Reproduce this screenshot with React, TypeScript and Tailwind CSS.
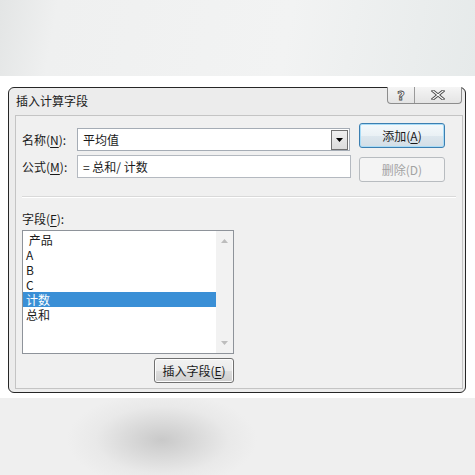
const FONT = "font-['Noto_Sans_CJK_SC','Microsoft_YaHei',sans-serif]";
const BTN =
  "flex items-center justify-center rounded-[3px] border text-[12px] leading-none";

const fields = [" 产品", "A", "B", "C", "计数", "总和"];

function Accel({ text, k, after = "" }: { text: string; k: string; after?: string }) {
  return (
    <span>
      {text}(<span className="underline underline-offset-2">{k}</span>){after}
    </span>
  );
}

function TitleButtons() {
  return (
    <div className="-mt-[1px] mr-[3px] flex h-[17px] w-[75px] rounded-b-[4px] border border-t-0 border-[#8d8d8d] bg-[linear-gradient(#f5f5f5,#e4e4e4)]">
      <div className="flex w-[27px] items-center justify-center border-r border-[#9a9a9a]">
        <span className="text-[13px] font-bold leading-none text-white [-webkit-text-stroke:0.8px_#4a4a4a] font-['DejaVu_Sans',sans-serif]">
          ?
        </span>
      </div>
      <div className="flex flex-1 items-center justify-center">
        <svg width="14" height="10" viewBox="0 0 14 10">
          <path d="M2 1 L12 9 M12 1 L2 9" stroke="#4a4a4a" strokeWidth="3" strokeLinecap="square" />
          <path d="M2 1 L12 9 M12 1 L2 9" stroke="#ffffff" strokeWidth="1.2" strokeLinecap="square" />
        </svg>
      </div>
    </div>
  );
}

function Dialog() {
  return (
    <div className={`ml-[8px] flex h-[306px] w-[458px] flex-col rounded-[6px] border border-[#262626] bg-[#ececec] ${FONT} text-[#1a1a1a]`}>
      <div className="flex h-[27px] items-start justify-between">
        <div className="pl-[7px] pt-[5px] text-[12px] leading-[16px]">插入计算字段</div>
        <TitleButtons />
      </div>
      <div className="ml-[6px] flex h-[274px] w-[448px] flex-col border border-[#c4c4c4] bg-[#f0f0f0] pl-[6px] pt-[7px] text-[12px]">
        <div className="flex">
          <div className="mt-[5px] flex flex-col">
            <div className="flex items-center">
              <div className="w-[55px] leading-[16px]">
                <Accel text="名称" k="N" after=":" />
              </div>
              <div className="flex h-[23px] w-[273px] items-center justify-between border border-[#a5acb5] bg-white pl-[5px] pr-[1px]">
                <span>平均值</span>
                <div className="flex h-[20px] w-[17px] items-center justify-center border border-[#707070] bg-[linear-gradient(#efefef,#dcdcdc)]">
                  <svg width="7" height="4" viewBox="0 0 7 4">
                    <path d="M0 0 H7 L3.5 4 Z" fill="#000" />
                  </svg>
                </div>
              </div>
            </div>
            <div className="mt-[4px] flex items-center">
              <div className="w-[55px] leading-[16px]">
                <Accel text="公式" k="M" after=":" />
              </div>
              <div className="flex h-[23px] w-[274px] items-center whitespace-pre border border-[#b4b9c0] bg-white pl-[5px]">
                = 总和/ 计数
              </div>
            </div>
          </div>
          <div className="ml-[8px] flex flex-col">
            <div className={`${BTN} h-[25px] w-[86px] border-[#3c7fb1] bg-[linear-gradient(#f4f9fc_0%,#eaf1f5_50%,#dde7ee_51%,#d3dee6_100%)] shadow-[inset_0_0_0_1px_#a9dcf7]`}>
              <Accel text="添加" k="A" />
            </div>
            <div className={`${BTN} mt-[9px] h-[25px] w-[86px] border-[#b8bcc0] bg-[#f4f4f4] text-[#a3a3a3]`}>
              删除(D)
            </div>
          </div>
        </div>
        <div className="mt-[14px] h-[2px] w-[434px] border-t border-b border-t-[#d9d9d9] border-b-white" />
        <div className="mt-[13px] leading-[16px]">
          <Accel text="字段" k="F" after=":" />
        </div>
        <div className="mt-[3px] flex h-[124px] w-[212px] border border-[#8e939a] bg-white">
          <div className="flex-1 pt-[1px]">
            {fields.map((f, i) => (
              <div
                key={f}
                className={`flex h-[15px] items-center overflow-hidden whitespace-pre pl-[3px] leading-[12px] ${
                  i === 4 ? "bg-[#3a8fd6] text-white" : ""
                }`}
              >
                {f}
              </div>
            ))}
          </div>
          <div className="flex w-[17px] flex-col items-center justify-between bg-[#f2f2f2] py-[8px]">
            <svg width="7" height="4" viewBox="0 0 7 4">
              <path d="M0 4 H7 L3.5 0 Z" fill="#bdbdbd" />
            </svg>
            <svg width="7" height="4" viewBox="0 0 7 4">
              <path d="M0 0 H7 L3.5 4 Z" fill="#bdbdbd" />
            </svg>
          </div>
        </div>
        <div className="mt-[4px] flex w-[212px] justify-end">
          <div className={`${BTN} h-[25px] w-[80px] border-[#707070] bg-[linear-gradient(#f2f2f2_0%,#ebebeb_50%,#dddddd_51%,#cfcfcf_100%)] shadow-[inset_0_0_0_1px_#fcfcfc]`}>
            <Accel text="插入字段" k="E" />
          </div>
        </div>
      </div>
    </div>
  );
}

export default function App() {
  return (
    <div className="flex h-[475px] w-[475px] flex-col overflow-hidden bg-white">
      <div className="h-[76px] bg-[linear-gradient(100deg,#e3e5e5_0%,#eff0f0_12%,#f2f3f3_60%,#e6eaea_100%)]" />
      <div className="h-[11px]" />
      <Dialog />
      <div className="h-[5px]" />
      <div className="flex-1 bg-[radial-gradient(ellipse_95px_48px_at_162px_42px,#c9c9c9_0%,#d9d9d9_35%,#e9e9e9_70%,#efefef_100%)]" />
    </div>
  );
}
